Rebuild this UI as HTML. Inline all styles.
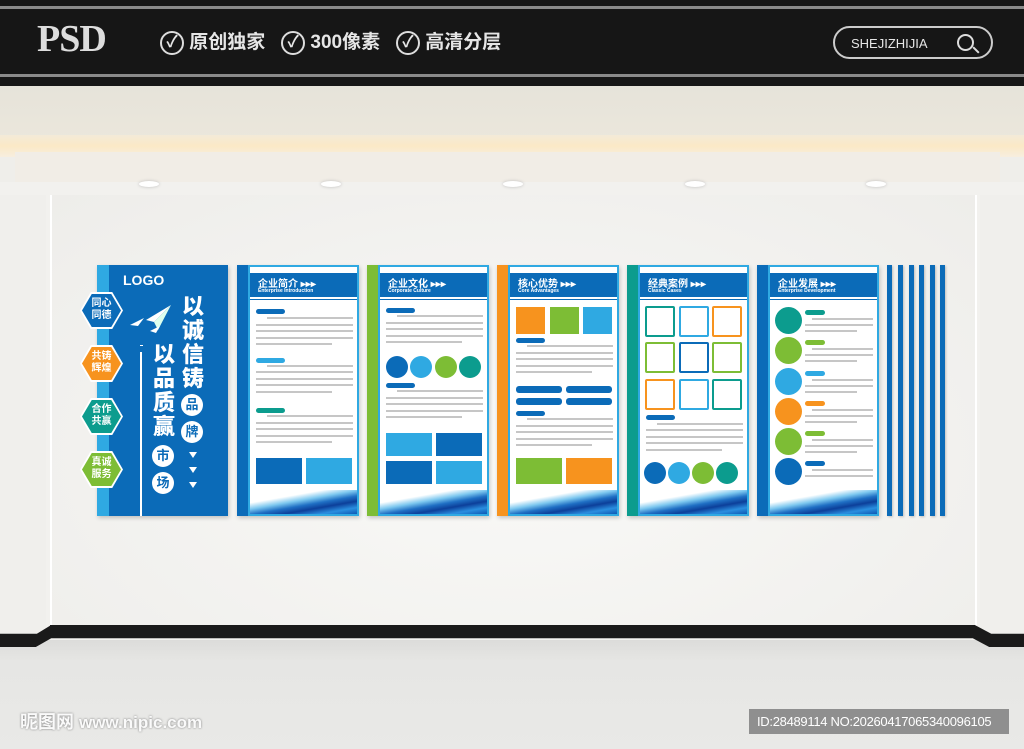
<!DOCTYPE html><html><head><meta charset="utf-8"><style>
*{margin:0;padding:0;box-sizing:border-box}
body{width:1024px;height:749px;overflow:hidden;position:relative;background:#efeeea;font-family:"Liberation Sans","Noto Sans CJK SC",sans-serif}
.a{position:absolute}
.top{left:0;top:0;width:1024px;height:86px;background:#161616}
.hl{left:0;width:1024px;height:3px;background:#8a8a8a}
.pn{position:absolute;top:265px;width:122px;height:251px;box-shadow:1px 2px 4px rgba(0,0,0,.2)}
.st{position:absolute;left:0;top:0;width:11px;height:251px}
.in{position:absolute;left:11px;top:0;width:111px;height:251px;background:#fff;border:2px solid #2fa9e2;overflow:hidden}
.hd{position:absolute;left:0;top:6px;width:107px;height:24px;background:#0b6bb8;color:#fff}
.hd b{position:absolute;left:8px;top:2px;font-size:10px;letter-spacing:0}
.hd i{position:absolute;left:8px;top:15px;font-size:5px;font-style:normal;font-weight:bold}
.ln2{position:absolute;left:0;top:32px;width:107px;height:1px;background:#0b6bb8}
.l{position:absolute;height:2px;background:#c6c6c6}
.p{position:absolute;height:5px;border-radius:3px}
.r{position:absolute}
.c{position:absolute;border-radius:50%}
.o{position:absolute;border:2px solid;border-radius:2px}
.wv{position:absolute;left:0;bottom:0;width:107px;height:24px;background:linear-gradient(170deg,#fff 30%,#7cc7ef 45%,#1f6fc4 58%,#0c3f9a 70%,#2a8fe0 85%,#0e58b4)}
.hx{position:absolute;left:80px;width:43px;height:37px;clip-path:polygon(25% 0,75% 0,100% 50%,75% 100%,25% 100%,0 50%);background:#fff}
.hx div{position:absolute;left:2px;top:2px;width:39px;height:33px;clip-path:polygon(25% 0,75% 0,100% 50%,75% 100%,25% 100%,0 50%);color:#fff;font-size:10px;font-weight:bold;text-align:center;line-height:12px;padding-top:4px}
.bc{position:absolute;width:22px;height:22px;border-radius:50%;background:#fff;color:#0b6bb8;font-size:13px;font-weight:bold;text-align:center;line-height:22px}
.big{position:absolute;color:#fff;font-size:22px;font-weight:900;width:26px;line-height:24px;text-align:center}
.tri{position:absolute;width:0;height:0;border-left:4px solid transparent;border-right:4px solid transparent;border-top:6px solid #fff}
.vs{position:absolute;top:265px;width:5px;height:251px;background:#0b6bb8;box-shadow:1px 1px 2px rgba(0,0,0,.2)}
</style></head><body>
<div class="a top"></div>
<div class="a hl" style="top:6px"></div><div class="a hl" style="top:74px"></div>
<div class="a" style="left:37px;top:17px;font-family:'Liberation Serif',serif;font-size:38px;font-weight:bold;color:#ddd;letter-spacing:-1px">PSD</div>
<div class="a" style="left:160px;top:27px;color:#e6e6e6;font-size:19px;font-weight:bold;white-space:nowrap">
<span style="display:inline-block;width:24px;height:24px;border:2px solid #ddd;border-radius:50%;text-align:center;line-height:20px;font-size:16px;vertical-align:middle">✓</span> 原创独家&nbsp;&nbsp;
<span style="display:inline-block;width:24px;height:24px;border:2px solid #ddd;border-radius:50%;text-align:center;line-height:20px;font-size:16px;vertical-align:middle">✓</span> 300像素&nbsp;&nbsp;
<span style="display:inline-block;width:24px;height:24px;border:2px solid #ddd;border-radius:50%;text-align:center;line-height:20px;font-size:16px;vertical-align:middle">✓</span> 高清分层</div>
<div class="a" style="left:833px;top:26px;width:160px;height:33px;border:2px solid #ccc;border-radius:17px;color:#e6e6e6;font-size:13px;padding:8px 0 0 16px">SHEJIZHIJIA <span style="position:absolute;left:122px;top:6px;width:17px;height:17px;border:2px solid #ddd;border-radius:50%"></span><span style="position:absolute;left:137px;top:21px;width:8px;height:2px;background:#ddd;transform:rotate(45deg)"></span></div>
<!-- ceiling -->
<div class="a" style="left:0;top:86px;width:1024px;height:66px;background:linear-gradient(#e6e3da,#ece8dc)"></div>
<div class="a" style="left:0;top:135px;width:1024px;height:22px;background:linear-gradient(#f3ead8,#fbe9c6,#f7eedf)"></div>
<div class="a" style="left:15px;top:152px;width:985px;height:30px;background:#f1ede6"></div>
<div class="a" style="left:0;top:182px;width:1024px;height:460px;background:#f2f1ee"></div>
<div class="a" style="left:50px;top:195px;width:927px;height:432px;background:radial-gradient(ellipse at 50% 60%,#f9f9f7,#eeedea);border-left:2px solid #fff;border-right:2px solid #fff"></div>
<div class="a" style="left:0;top:195px;width:46px;height:440px;background:#f0efec"></div>
<div class="a" style="left:980px;top:195px;width:44px;height:440px;background:#f0efec"></div>
<div class="a" style="left:139px;top:181px;width:20px;height:6px;border-radius:50%;background:#fff;box-shadow:0 0 3px #bbb"></div>
<div class="a" style="left:321px;top:181px;width:20px;height:6px;border-radius:50%;background:#fff;box-shadow:0 0 3px #bbb"></div>
<div class="a" style="left:503px;top:181px;width:20px;height:6px;border-radius:50%;background:#fff;box-shadow:0 0 3px #bbb"></div>
<div class="a" style="left:685px;top:181px;width:20px;height:6px;border-radius:50%;background:#fff;box-shadow:0 0 3px #bbb"></div>
<div class="a" style="left:866px;top:181px;width:20px;height:6px;border-radius:50%;background:#fff;box-shadow:0 0 3px #bbb"></div>
<!-- baseboard & floor -->
<div class="a" style="left:0;top:640px;width:1024px;height:109px;background:linear-gradient(#dcdcda,#e6e6e4 20%,#e9e9e7)"></div>
<div class="a" style="left:50px;top:625px;width:925px;height:13px;background:#1c1c1c"></div>
<div class="a" style="left:0;top:625px;width:1024px;height:22px;background:#1a1a1a;clip-path:polygon(0 40%,3.6% 40%,5% 0,95.2% 0,96.8% 40%,100% 40%,100% 100%,96.6% 100%,95% 60%,5% 60%,3.5% 100%,0 100%)"></div>
<div class="a" style="left:20px;top:708px;color:#fafafa;font-size:18px;font-weight:bold;text-shadow:0 0 2px #777">昵图网 <span style="font-size:17px">www.nipic.com</span></div>
<div class="a" style="left:749px;top:709px;width:260px;height:25px;background:#8f8f8f;color:#fff;font-size:13px;line-height:25px;padding-left:8px;letter-spacing:-.3px">ID:28489114 NO:20260417065340096105</div>

<!-- logo panel -->
<div class="a" style="left:97px;top:265px;width:131px;height:251px;background:#0b6bb8;box-shadow:1px 2px 4px rgba(0,0,0,.2)"></div>
<div class="a" style="left:97px;top:265px;width:12px;height:251px;background:#2fa9e2"></div>
<div class="a" style="left:123px;top:272px;color:#fff;font-size:14px;font-weight:bold">LOGO</div>
<div class="hx" style="top:292px"><div style="background:#0b6bb8">同心<br>同德</div></div>
<div class="hx" style="top:345px"><div style="background:#f7931e">共铸<br>辉煌</div></div>
<div class="hx" style="top:398px"><div style="background:#0c9c8e">合作<br>共赢</div></div>
<div class="hx" style="top:451px"><div style="background:#7dbd35">真诚<br>服务</div></div>
<svg class="a" style="left:128px;top:300px" width="50" height="42"><polygon points="43,5 18,20 26,22" fill="#fff"/><polygon points="43,5 26,22 30,30" fill="#dfe" /><polygon points="16,18 2,25 10,26" fill="#fff"/><polygon points="32,26 22,31 28,33" fill="#fff"/></svg>
<div class="a" style="left:140px;top:352px;width:2px;height:164px;background:#fff"></div>
<div class="a" style="left:140px;top:345px;width:2px;height:5px;border-top:1px dotted #fff"></div>
<div class="big" style="left:180px;top:295px">以<br>诚<br>信<br>铸</div>
<div class="big" style="left:151px;top:343px">以<br>品<br>质<br>赢</div>
<div class="bc" style="left:181px;top:394px">品</div>
<div class="bc" style="left:181px;top:421px">牌</div>
<div class="bc" style="left:152px;top:445px">市</div>
<div class="bc" style="left:152px;top:472px">场</div>
<div class="tri" style="left:189px;top:452px"></div><div class="tri" style="left:189px;top:467px"></div><div class="tri" style="left:189px;top:482px"></div>

<!-- panel 1 -->
<div class="pn" style="left:237px"><div class="st" style="background:#0b6bb8"></div><div class="in">
<div class="hd"><b>企业简介 ▸▸▸</b><i>Enterprise Introduction</i></div><div class="ln2"></div>
<div class="p" style="left:6px;top:42px;width:29px;background:#0b6bb8"></div>
<div class="l" style="left:17px;top:50px;width:86px"></div><div class="l" style="left:6px;top:57px;width:97px"></div><div class="l" style="left:6px;top:63px;width:97px"></div><div class="l" style="left:6px;top:70px;width:97px"></div><div class="l" style="left:6px;top:76px;width:76px"></div>
<div class="p" style="left:6px;top:91px;width:29px;background:#2fa9e2"></div>
<div class="l" style="left:17px;top:98px;width:86px"></div><div class="l" style="left:6px;top:104px;width:97px"></div><div class="l" style="left:6px;top:111px;width:97px"></div><div class="l" style="left:6px;top:117px;width:97px"></div><div class="l" style="left:6px;top:124px;width:76px"></div>
<div class="p" style="left:6px;top:141px;width:29px;background:#0c9c8e"></div>
<div class="l" style="left:17px;top:148px;width:86px"></div><div class="l" style="left:6px;top:155px;width:97px"></div><div class="l" style="left:6px;top:161px;width:97px"></div><div class="l" style="left:6px;top:168px;width:97px"></div><div class="l" style="left:6px;top:174px;width:76px"></div>
<div class="r" style="left:6px;top:191px;width:46px;height:26px;background:#0b6bb8"></div><div class="r" style="left:56px;top:191px;width:46px;height:26px;background:#2fa9e2"></div>
<div class="wv"></div></div></div>

<!-- panel 2 -->
<div class="pn" style="left:367px"><div class="st" style="background:#7dbd35"></div><div class="in">
<div class="hd"><b>企业文化 ▸▸▸</b><i>Corporate Culture</i></div><div class="ln2"></div>
<div class="p" style="left:6px;top:41px;width:29px;background:#0b6bb8"></div>
<div class="l" style="left:17px;top:48px;width:86px"></div><div class="l" style="left:6px;top:55px;width:97px"></div><div class="l" style="left:6px;top:61px;width:97px"></div><div class="l" style="left:6px;top:68px;width:97px"></div><div class="l" style="left:6px;top:74px;width:76px"></div>
<div class="c" style="left:6px;top:89px;width:22px;height:22px;background:#0b6bb8"></div><div class="c" style="left:30px;top:89px;width:22px;height:22px;background:#2fa9e2"></div><div class="c" style="left:55px;top:89px;width:22px;height:22px;background:#7dbd35"></div><div class="c" style="left:79px;top:89px;width:22px;height:22px;background:#0c9c8e"></div>
<div class="p" style="left:6px;top:116px;width:29px;background:#0b6bb8"></div>
<div class="l" style="left:17px;top:123px;width:86px"></div><div class="l" style="left:6px;top:130px;width:97px"></div><div class="l" style="left:6px;top:136px;width:97px"></div><div class="l" style="left:6px;top:143px;width:97px"></div><div class="l" style="left:6px;top:149px;width:76px"></div>
<div class="r" style="left:6px;top:166px;width:46px;height:23px;background:#2fa9e2"></div><div class="r" style="left:56px;top:166px;width:46px;height:23px;background:#0b6bb8"></div>
<div class="r" style="left:6px;top:194px;width:46px;height:23px;background:#0b6bb8"></div><div class="r" style="left:56px;top:194px;width:46px;height:23px;background:#2fa9e2"></div>
<div class="wv"></div></div></div>

<!-- panel 3 -->
<div class="pn" style="left:497px"><div class="st" style="background:#f7931e"></div><div class="in">
<div class="hd"><b>核心优势 ▸▸▸</b><i>Core Advantages</i></div><div class="ln2"></div>
<div class="r" style="left:6px;top:40px;width:29px;height:27px;background:#f7931e"></div><div class="r" style="left:40px;top:40px;width:29px;height:27px;background:#7dbd35"></div><div class="r" style="left:73px;top:40px;width:29px;height:27px;background:#2fa9e2"></div>
<div class="p" style="left:6px;top:71px;width:29px;background:#0b6bb8"></div>
<div class="l" style="left:17px;top:78px;width:86px"></div><div class="l" style="left:6px;top:85px;width:97px"></div><div class="l" style="left:6px;top:91px;width:97px"></div><div class="l" style="left:6px;top:98px;width:97px"></div><div class="l" style="left:6px;top:104px;width:76px"></div>
<div class="p" style="left:6px;top:119px;width:46px;height:7px;background:#0b6bb8"></div><div class="p" style="left:56px;top:119px;width:46px;height:7px;background:#0b6bb8"></div>
<div class="p" style="left:6px;top:131px;width:46px;height:7px;background:#0b6bb8"></div><div class="p" style="left:56px;top:131px;width:46px;height:7px;background:#0b6bb8"></div>
<div class="p" style="left:6px;top:144px;width:29px;background:#0b6bb8"></div>
<div class="l" style="left:17px;top:151px;width:86px"></div><div class="l" style="left:6px;top:158px;width:97px"></div><div class="l" style="left:6px;top:164px;width:97px"></div><div class="l" style="left:6px;top:171px;width:97px"></div><div class="l" style="left:6px;top:177px;width:76px"></div>
<div class="r" style="left:6px;top:191px;width:46px;height:26px;background:#7dbd35"></div><div class="r" style="left:56px;top:191px;width:46px;height:26px;background:#f7931e"></div>
<div class="wv"></div></div></div>

<!-- panel 4 -->
<div class="pn" style="left:627px"><div class="st" style="background:#0c9c8e"></div><div class="in">
<div class="hd"><b>经典案例 ▸▸▸</b><i>Classic Cases</i></div><div class="ln2"></div>
<div class="o" style="left:5px;top:39px;width:30px;height:31px;border-color:#0c9c8e"></div><div class="o" style="left:39px;top:39px;width:30px;height:31px;border-color:#2fa9e2"></div><div class="o" style="left:72px;top:39px;width:30px;height:31px;border-color:#f7931e"></div>
<div class="o" style="left:5px;top:75px;width:30px;height:31px;border-color:#7dbd35"></div><div class="o" style="left:39px;top:75px;width:30px;height:31px;border-color:#0b6bb8"></div><div class="o" style="left:72px;top:75px;width:30px;height:31px;border-color:#7dbd35"></div>
<div class="o" style="left:5px;top:112px;width:30px;height:31px;border-color:#f7931e"></div><div class="o" style="left:39px;top:112px;width:30px;height:31px;border-color:#2fa9e2"></div><div class="o" style="left:72px;top:112px;width:30px;height:31px;border-color:#0c9c8e"></div>
<div class="p" style="left:6px;top:148px;width:29px;background:#0b6bb8"></div>
<div class="l" style="left:17px;top:156px;width:86px"></div><div class="l" style="left:6px;top:162px;width:97px"></div><div class="l" style="left:6px;top:169px;width:97px"></div><div class="l" style="left:6px;top:175px;width:97px"></div><div class="l" style="left:6px;top:182px;width:76px"></div>
<div class="c" style="left:4px;top:195px;width:22px;height:22px;background:#0b6bb8"></div><div class="c" style="left:28px;top:195px;width:22px;height:22px;background:#2fa9e2"></div><div class="c" style="left:52px;top:195px;width:22px;height:22px;background:#7dbd35"></div><div class="c" style="left:76px;top:195px;width:22px;height:22px;background:#0c9c8e"></div>
<div class="wv"></div></div></div>

<!-- panel 5 -->
<div class="pn" style="left:757px"><div class="st" style="background:#0b6bb8"></div><div class="in">
<div class="hd"><b>企业发展 ▸▸▸</b><i>Enterprise Development</i></div><div class="ln2"></div>
<div class="c" style="left:5px;top:40px;width:27px;height:27px;background:#0c9c8e"></div><div class="p" style="left:35px;top:43px;width:20px;background:#0c9c8e"></div><div class="l" style="left:42px;top:51px;width:61px"></div><div class="l" style="left:35px;top:57px;width:68px"></div><div class="l" style="left:35px;top:63px;width:52px"></div>
<div class="c" style="left:5px;top:70px;width:27px;height:27px;background:#7dbd35"></div><div class="p" style="left:35px;top:73px;width:20px;background:#7dbd35"></div><div class="l" style="left:42px;top:81px;width:61px"></div><div class="l" style="left:35px;top:87px;width:68px"></div><div class="l" style="left:35px;top:93px;width:52px"></div>
<div class="c" style="left:5px;top:101px;width:27px;height:27px;background:#2fa9e2"></div><div class="p" style="left:35px;top:104px;width:20px;background:#2fa9e2"></div><div class="l" style="left:42px;top:112px;width:61px"></div><div class="l" style="left:35px;top:118px;width:68px"></div><div class="l" style="left:35px;top:124px;width:52px"></div>
<div class="c" style="left:5px;top:131px;width:27px;height:27px;background:#f7931e"></div><div class="p" style="left:35px;top:134px;width:20px;background:#f7931e"></div><div class="l" style="left:42px;top:142px;width:61px"></div><div class="l" style="left:35px;top:148px;width:68px"></div><div class="l" style="left:35px;top:154px;width:52px"></div>
<div class="c" style="left:5px;top:161px;width:27px;height:27px;background:#7dbd35"></div><div class="p" style="left:35px;top:164px;width:20px;background:#7dbd35"></div><div class="l" style="left:42px;top:172px;width:61px"></div><div class="l" style="left:35px;top:178px;width:68px"></div><div class="l" style="left:35px;top:184px;width:52px"></div>
<div class="c" style="left:5px;top:191px;width:27px;height:27px;background:#0b6bb8"></div><div class="p" style="left:35px;top:194px;width:20px;background:#0b6bb8"></div><div class="l" style="left:42px;top:202px;width:61px"></div><div class="l" style="left:35px;top:208px;width:68px"></div>
<div class="wv"></div></div></div>

<div class="vs" style="left:887px"></div><div class="vs" style="left:898px"></div><div class="vs" style="left:909px"></div><div class="vs" style="left:919px"></div><div class="vs" style="left:930px"></div><div class="vs" style="left:940px"></div>
</body></html>
